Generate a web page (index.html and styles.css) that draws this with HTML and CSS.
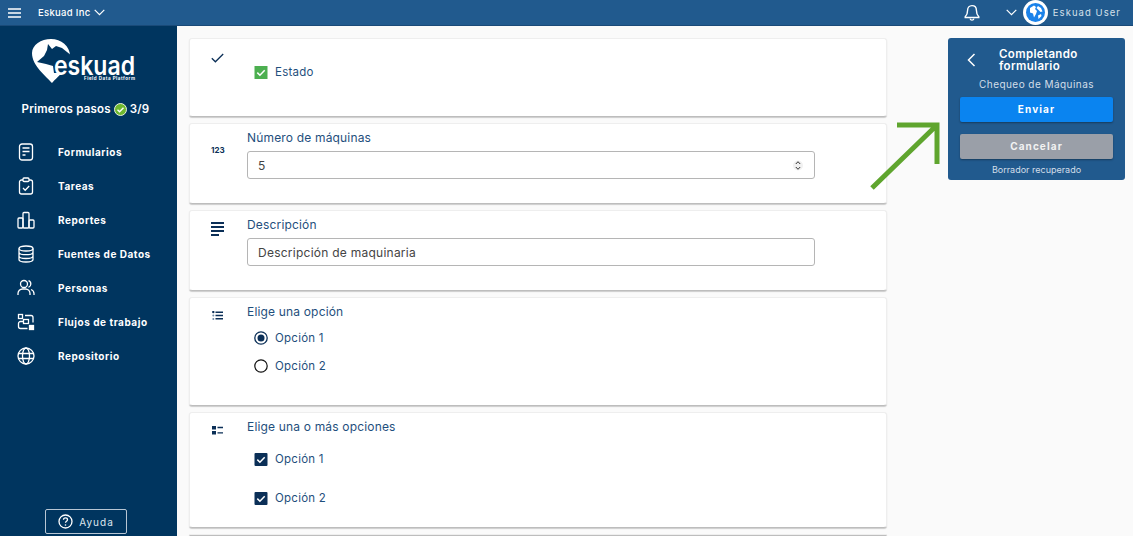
FILE: index.html
```html
<!DOCTYPE HTML>
<html>
<head>
    <title>Eskuad</title>
    <link rel="stylesheet" href="styles.css">
</head>
<body>
    <div class="topbar">
        <svg class="burger" width="13" height="10" viewBox="0 0 13 10"><path d="M0 1h13M0 5h13M0 9h13" stroke="#fff" stroke-width="1.5"/></svg>
        <span class="company">Eskuad Inc</span>
        <svg width="11" height="7" viewBox="0 0 11 7"><path d="M.7 .8l4.8 4.8L10.3 .8" fill="none" stroke="#fff" stroke-width="1.2"/></svg>
        <div class="topright">
            <svg class="bell" width="16" height="17" viewBox="0 0 16 17"><path d="M8 1.6c-2.8 0-4.4 2-4.4 4.6 0 3.2-.8 5-2.4 6.600v.7h13.600v-.7c-1.600-1.600-2.400-3.400-2.400-6.600C12.400 3.600 10.800 1.600 8 1.600z" fill="none" stroke="#fff" stroke-width="1.400"/><path d="M6 14.600c.3 1.100 1 1.600 2 1.600s1.700-.5 2-1.600" fill="none" stroke="#fff" stroke-width="1.200"/></svg>
            <svg class="userchev" width="11" height="7" viewBox="0 0 11 7"><path d="M.7 .8l4.800 4.800L10.300 .8" fill="none" stroke="#fff" stroke-width="1.200"/></svg>
            <svg class="avatar" width="25" height="25" viewBox="0 0 25 25">
                <circle cx="12.500" cy="12.500" r="12.500" fill="#fff"/>
                <circle cx="12.500" cy="12.500" r="9.500" fill="#1a82ea"/>
                <path d="M7 8l4-2.500 2 1.500-1 2 2 2-1 3-2 3.500-1-4-3-1zM15 6l3 2 1.500 3.500-2 .5-2-2-2-2zM15 15.500l3-1.500 .5 2-3 3z" fill="#fff"/>
            </svg>
            <span class="username">Eskuad User</span>
        </div>
    </div>

    <div class="app">
        <div class="sidebar">
            <svg class="logo" width="177" height="52" viewBox="0 36 177 52">
                <path d="M51 39C61 39 70 46 70 56C70 68 58 76 52 83C46 76 32 66 32 53C32 45 41 39 51 39Z" fill="#fff"/>
                <path d="M37 62L44 56L47 50L48 44L52 49L56 46L62 48L72 56V73H54L53 66L46 64Z" fill="#00355f"/>
                <text class="logo-name" x="54" y="75" textLength="81" lengthAdjust="spacingAndGlyphs">eskuad</text>
                <text class="logo-sub" x="84" y="80" textLength="51">Field Data Platform</text>
            </svg>
            <div class="steps">
                <span>Primeros pasos</span>
                <svg width="13" height="13" viewBox="0 0 13 13"><circle cx="6.500" cy="6.500" r="6" fill="#6fb82f" stroke="#e8f2dc"/><path d="M3.500 6.700l2.100 2.100 3.900-4" fill="none" stroke="#fff" stroke-width="1.400"/></svg>
                <span>3/9</span>
            </div>
            <div class="nav">
                <div class="nav-item">
                    <svg width="18" height="18" viewBox="0 0 18 18"><rect x="2.500" y="1" width="13" height="16" rx="2.500"/><path d="M5.500 5h7M5.500 8.500h7M5.500 12h3"/></svg>
                    <span>Formularios</span>
                </div>
                <div class="nav-item">
                    <svg width="18" height="18" viewBox="0 0 18 18"><path d="M6 3H4.500a2 2 0 0 0-2 2v10a2 2 0 0 0 2 2h9a2 2 0 0 0 2-2V5a2 2 0 0 0-2-2H12"/><rect x="6" y="1" width="6" height="3.500" rx="1"/><path d="M6 11l2.200 2.200L12.200 9"/></svg>
                    <span>Tareas</span>
                </div>
                <div class="nav-item">
                    <svg width="18" height="18" viewBox="0 0 18 18"><rect x="1" y="7" width="5" height="10" rx="1"/><rect x="6" y="1.500" width="6" height="15.500" rx="1"/><rect x="12" y="9" width="5" height="8" rx="1"/></svg>
                    <span>Reportes</span>
                </div>
                <div class="nav-item">
                    <svg width="18" height="18" viewBox="0 0 18 18"><ellipse cx="9" cy="3.500" rx="7" ry="2.500"/><path d="M2 3.500v11c0 1.400 3.100 2.500 7 2.500s7-1.100 7-2.500v-11M2 7.200c0 1.400 3.100 2.500 7 2.500s7-1.100 7-2.500M2 11c0 1.400 3.100 2.500 7 2.500s7-1.100 7-2.500"/></svg>
                    <span>Fuentes de Datos</span>
                </div>
                <div class="nav-item">
                    <svg width="18" height="18" viewBox="0 0 18 18"><circle cx="7" cy="5" r="3.500"/><path d="M1 16v-1.500A4.500 4.500 0 0 1 5.500 10h3a4.500 4.500 0 0 1 4.500 4.500V16M11.500 1.700a3.500 3.500 0 0 1 0 6.600M14 10.500a4.500 4.500 0 0 1 3 4V16"/></svg>
                    <span>Personas</span>
                </div>
                <div class="nav-item">
                    <svg width="18" height="18" viewBox="0 0 18 18"><rect x="1.500" y="1.500" width="4" height="4"/><rect x="12.500" y="12.500" width="4" height="4" fill="#fff"/><rect x="6.500" y="6.500" width="5" height="4"/><path d="M8 2.500h6a2 2 0 0 1 2 2v5M6.500 8.500h-3a2 2 0 0 0-2 2v3a2 2 0 0 0 2 2h7"/></svg>
                    <span>Flujos de trabajo</span>
                </div>
                <div class="nav-item">
                    <svg width="18" height="18" viewBox="0 0 18 18"><circle cx="9" cy="9" r="8"/><ellipse cx="9" cy="9" rx="3.500" ry="8"/><path d="M1.500 6.500h15M1.500 11.500h15"/></svg>
                    <span>Repositorio</span>
                </div>
            </div>
            <div class="help">
                <svg width="15" height="15" viewBox="0 0 15 15"><circle cx="7.500" cy="7.500" r="6.500" fill="none" stroke="#fff" stroke-width="1.300"/><path d="M5.500 5.800c0-1.200.9-1.900 2-1.900s2 .7 2 1.800c0 1.500-2 1.500-2 3" fill="none" stroke="#fff" stroke-width="1.300"/><circle cx="7.500" cy="11" r=".8" fill="#fff"/></svg>
                <span>Ayuda</span>
            </div>
        </div>

        <div class="main">
            <div class="cards">
                <div class="card card-state">
                    <div class="card-icon icon-top">
                        <svg width="13" height="10" viewBox="0 0 13 10"><path d="M.8 5.200l3.600 3.600L12.200 1" fill="none" stroke="#0b2f57" stroke-width="1.300"/></svg>
                    </div>
                    <div class="card-body state-body">
                        <div class="option">
                            <svg class="box" width="13" height="13" viewBox="0 0 13 13"><rect width="13" height="13" fill="#4caf50"/><path d="M2.800 6.600l2.600 2.600 4.800-5" fill="none" stroke="#fff" stroke-width="1.500"/></svg>
                            <span>Estado</span>
                        </div>
                    </div>
                </div>

                <div class="card card-input">
                    <div class="card-icon"><span class="num-icon">123</span></div>
                    <div class="card-body">
                        <div class="label">Número de máquinas</div>
                        <div class="field">
                            <span>5</span>
                            <svg width="10" height="13" viewBox="0 0 10 13"><circle cx="5" cy="6.500" r="5" fill="#f1f1f1"/><path d="M2.800 5l2.200-2.300L7.200 5M2.800 8l2.200 2.300L7.200 8" fill="none" stroke="#333" stroke-width="1"/></svg>
                        </div>
                    </div>
                </div>

                <div class="card card-input">
                    <div class="card-icon icon-text">
                        <svg width="13" height="14" viewBox="0 0 13 14"><path d="M0 1h13M0 5h13M0 9h13M0 13h8" stroke="#0b2f57" stroke-width="2"/></svg>
                    </div>
                    <div class="card-body">
                        <div class="label">Descripción</div>
                        <div class="field"><span>Descripción de maquinaria</span></div>
                    </div>
                </div>

                <div class="card card-radio">
                    <div class="card-icon icon-list">
                        <svg width="11" height="9" viewBox="0 0 11 9"><circle cx="1.300" cy="1" r="1.200" fill="#0b2f57"/><circle cx="1.300" cy="4.500" r="1" fill="#6f8aa5"/><circle cx="1.300" cy="8" r="1" fill="#6f8aa5"/><path d="M3.500 1.200H11M3.500 4.500H11M3.500 7.800H11" stroke="#0b2f57" stroke-width="1.500"/></svg>
                    </div>
                    <div class="card-body">
                        <div class="label">Elige una opción</div>
                        <div class="options radios">
                            <div class="option">
                                <svg class="box" width="14" height="14" viewBox="0 0 14 14"><circle cx="7" cy="7" r="6.200" fill="none" stroke="#0b2f57" stroke-width="1.300"/><circle cx="7" cy="7" r="3.500" fill="#0b2f57"/></svg>
                                <span>Opción 1</span>
                            </div>
                            <div class="option">
                                <svg class="box" width="14" height="14" viewBox="0 0 14 14"><circle cx="7" cy="7" r="6.200" fill="none" stroke="#111" stroke-width="1.200"/></svg>
                                <span>Opción 2</span>
                            </div>
                        </div>
                    </div>
                </div>

                <div class="card card-check">
                    <div class="card-icon icon-list">
                        <svg width="11" height="9" viewBox="0 0 11 9"><rect width="4" height="3.500" fill="#0b2f57"/><rect y="5" width="4" height="3.500" fill="#0b2f57"/><path d="M5.500 1.500H11M5.500 6.800H11" stroke="#0b2f57" stroke-width="1.300"/></svg>
                    </div>
                    <div class="card-body">
                        <div class="label">Elige una o más opciones</div>
                        <div class="options checks">
                            <div class="option">
                                <svg class="box" width="13" height="13" viewBox="0 0 13 13"><rect width="13" height="13" rx="1" fill="#0b2f57"/><path d="M2.800 6.600l2.600 2.600 4.800-5" fill="none" stroke="#fff" stroke-width="1.500"/></svg>
                                <span>Opción 1</span>
                            </div>
                            <div class="option">
                                <svg class="box" width="13" height="13" viewBox="0 0 13 13"><rect width="13" height="13" rx="1" fill="#0b2f57"/><path d="M2.800 6.600l2.600 2.600 4.800-5" fill="none" stroke="#fff" stroke-width="1.500"/></svg>
                                <span>Opción 2</span>
                            </div>
                        </div>
                    </div>
                </div>

                <div class="card card-next"></div>
            </div>

            <div class="panel">
                <div class="panel-head">
                    <svg width="9" height="14" viewBox="0 0 9 14"><path d="M7.500 1L1.500 7l6 6" fill="none" stroke="#fff" stroke-width="1.500"/></svg>
                    <div class="panel-title">Completando formulario</div>
                </div>
                <div class="panel-sub">Chequeo de Máquinas</div>
                <div class="btn btn-send">Enviar</div>
                <div class="btn btn-cancel">Cancelar</div>
                <div class="panel-note">Borrador recuperado</div>
            </div>
        </div>
    </div>

    <svg class="arrow" width="72" height="70" viewBox="0 0 72 70"><path d="M2 66L67 3M27 3H67V42" fill="none" stroke="#5fa52e" stroke-width="5"/></svg>
</body>
</html>
```

FILE: styles.css
```css
html, body {
    margin: 0;
    height: 100%;
    overflow: hidden;
}

body {
    font-family: "Inter", "Open Sans", sans-serif;
    background: #fafafa;
    position: relative;
}

.topbar {
    height: 26px;
    background: #215a8e;
    border-bottom: 1px solid #1a4a78;
    box-sizing: border-box;
    display: flex;
    align-items: center;
    padding-left: 8px;
    color: #fff;
}

.company {
    font-size: 9.5px;
    font-weight: 500;
    margin-left: 17px;
    margin-right: 4px;
    letter-spacing: .3px;
}

.topright {
    margin-left: auto;
    display: flex;
    align-items: center;
    padding-right: 12px;
}

.bell {
    margin-right: 26px;
}

.userchev {
    margin-right: 6px;
}

.username {
    font-size: 9.5px;
    letter-spacing: 1.05px;
    margin-left: 5px;
    color: #d5e0ea;
}

.app {
    display: flex;
    height: 510px;
    overflow: hidden;
}

.sidebar {
    width: 177px;
    flex: none;
    background: #00355f;
    display: flex;
    flex-direction: column;
    color: #fff;
}

.logo {
    display: block;
    margin-top: 10px;
}

.logo-name {
    font-size: 26px;
    font-weight: 600;
    fill: #fff;
}

.logo-sub {
    font-size: 4.5px;
    font-weight: 700;
    fill: #fff;
}

.steps {
    display: flex;
    align-items: center;
    justify-content: center;
    gap: 3px;
    margin-top: 14px;
    font-size: 11.5px;
    font-weight: 600;
    letter-spacing: .2px;
    padding-right: 6px;
}

.nav {
    margin-top: 19px;
}

.nav-item {
    height: 34px;
    display: flex;
    align-items: center;
    padding-left: 17px;
    font-size: 10px;
    font-weight: 700;
    letter-spacing: .52px;
}

.nav-item svg {
    fill: none;
    stroke: #fff;
    stroke-width: 1.3;
    margin-right: 23px;
}

.help {
    margin: auto 0 2px 45px;
    width: 82px;
    height: 25px;
    box-sizing: border-box;
    border: 1px solid #b8c6d4;
    border-radius: 2px;
    display: flex;
    align-items: center;
    justify-content: center;
    gap: 6px;
    font-size: 10px;
    letter-spacing: 1px;
    color: #dfe7ee;
}

.main {
    flex: 1;
    display: flex;
    align-items: flex-start;
    padding: 12px 8px 0 12px;
    gap: 61px;
    overflow: hidden;
}

.cards {
    width: 698px;
    flex: none;
    display: flex;
    flex-direction: column;
    gap: 6px;
}

.card {
    background: #fff;
    border: 1px solid #eeeeee;
    border-bottom-color: #bdbdbd;
    box-shadow: 0 1px 1px #cccccc;
    border-radius: 3px;
    box-sizing: border-box;
    display: flex;
    flex: none;
}

.card-state { height: 79px; }
.card-input { height: 81px; }
.card-radio { height: 109px; }
.card-check { height: 116px; }
.card-next { height: 2px; }

.card-icon {
    width: 57px;
    flex: none;
    box-sizing: border-box;
    padding: 21px 0 0 21px;
}

.card-icon svg {
    display: block;
}

.icon-top {
    padding-top: 14px;
}

.icon-text {
    padding-top: 11px;
}

.icon-list {
    padding-top: 13px;
    padding-left: 22px;
}

.num-icon {
    font-size: 8px;
    font-weight: 700;
    color: #0b2f57;
    display: block;
}

.card-body {
    flex: 1;
    padding-top: 7px;
}

.state-body {
    padding-top: 26px;
}

.label {
    font-size: 12px;
    line-height: 14px;
    letter-spacing: .17px;
    color: #1f4f7d;
}

.field {
    width: 568px;
    height: 28px;
    box-sizing: border-box;
    margin-top: 6px;
    border: 1px solid #b5b5b5;
    border-radius: 3px;
    display: flex;
    align-items: center;
    justify-content: space-between;
    padding: 0 11px 0 10px;
    font-size: 12px;
    letter-spacing: .25px;
    color: #444444;
}

.option {
    display: flex;
    align-items: center;
    height: 14px;
    padding-left: 7px;
    font-size: 11.5px;
    letter-spacing: .25px;
    color: #1f4f7d;
}

.option .box {
    flex: none;
    width: 14px;
    margin-right: 7px;
}

.options {
    display: flex;
    flex-direction: column;
}

.radios {
    margin-top: 12px;
    gap: 14px;
}

.checks {
    margin-top: 18px;
    gap: 25px;
}

.panel {
    width: 177px;
    height: 142px;
    flex: none;
    box-sizing: border-box;
    background: #215a8e;
    border-radius: 3px;
    padding: 10px 12px 0;
    color: #fff;
    text-align: center;
}

.panel-head {
    display: flex;
    align-items: center;
    text-align: left;
    padding-left: 7px;
}

.panel-head svg {
    flex: none;
    margin-right: 23px;
}

.panel-title {
    font-size: 11.5px;
    font-weight: 600;
    line-height: 12px;
    letter-spacing: .35px;
    width: 95px;
}

.panel-sub {
    font-size: 10px;
    line-height: 12px;
    margin-top: 6px;
    letter-spacing: .45px;
    color: #d3dee9;
}

.btn {
    height: 25px;
    box-sizing: border-box;
    padding-bottom: 1px;
    border-radius: 2px;
    font-size: 10px;
    font-weight: 700;
    letter-spacing: 1.1px;
    display: flex;
    align-items: center;
    justify-content: center;
    box-shadow: 0 1px 2px rgba(0, 0, 0, .35);
}

.btn-send {
    margin-top: 7px;
    background: #0a84f0;
}

.btn-cancel {
    margin-top: 12px;
    background: #9a9fa8;
    color: #f2f2f2;
}

.panel-note {
    font-size: 9px;
    line-height: 11px;
    margin-top: 5px;
    color: #d3dee9;
}

.arrow {
    position: absolute;
    left: 870px;
    top: 122px;
}
```
